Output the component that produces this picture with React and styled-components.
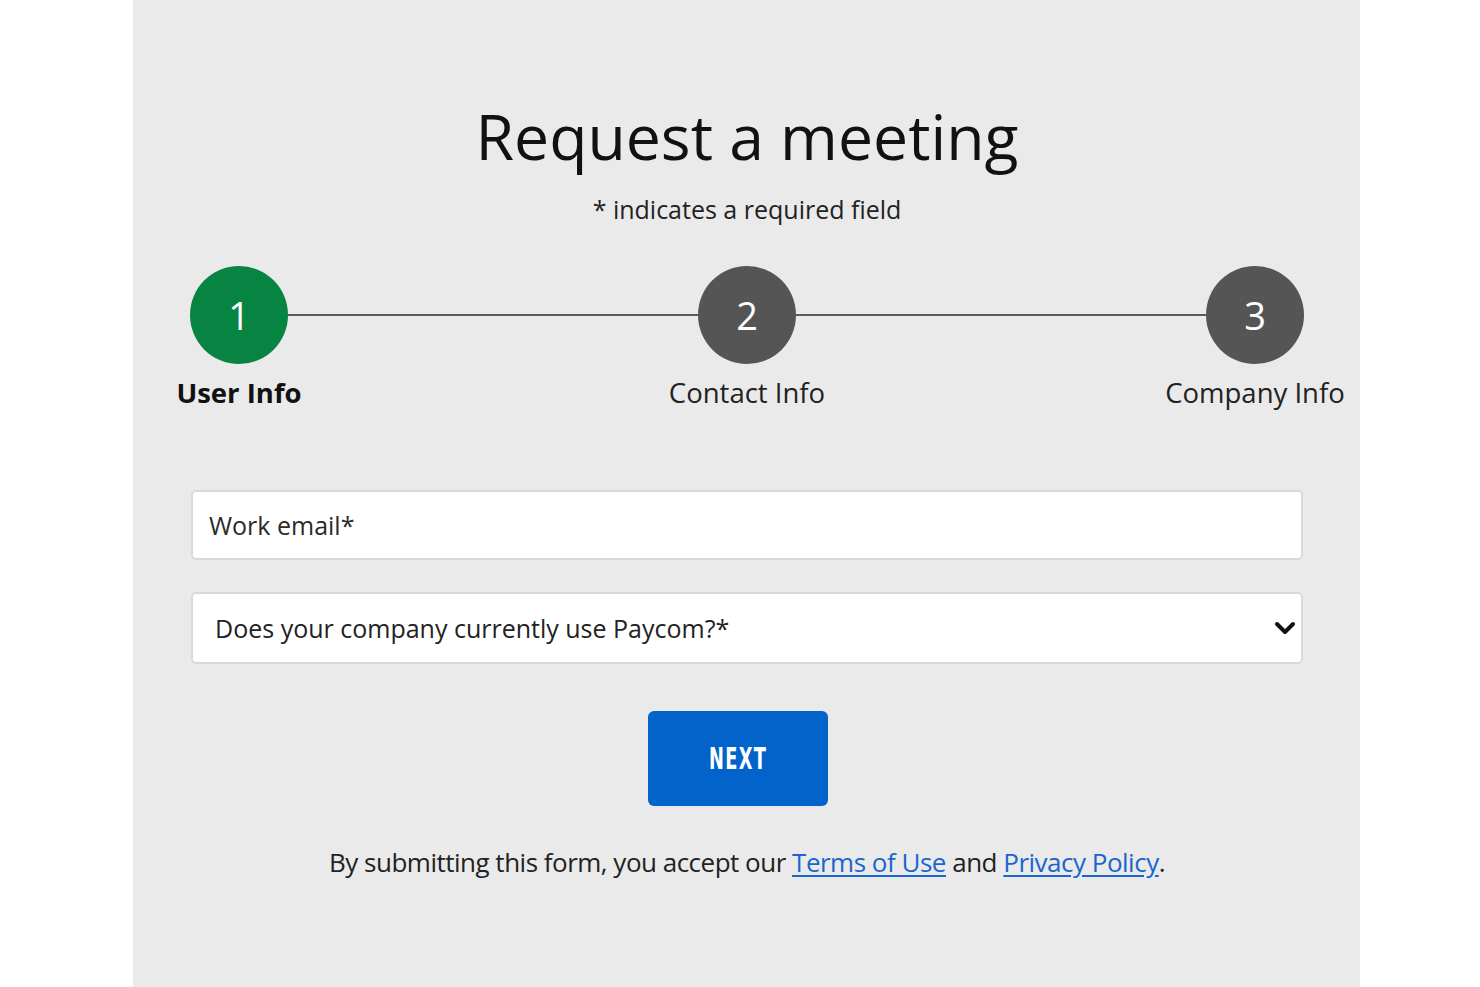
import styled, { createGlobalStyle } from "styled-components";

const GlobalStyle = createGlobalStyle`
  body {
    margin: 0;
    background: #ffffff;
    font-family: "Open Sans", "Liberation Sans", sans-serif;
  }
`;

const Page = styled.div`
  display: flex;
  justify-content: flex-start;
`;

const Panel = styled.div`
  width: 1227px;
  min-height: 987px;
  margin-left: 133px;
  background: #eaeaea;
  box-sizing: border-box;
  padding: 98px 57px 0 58px;
  display: flex;
  flex-direction: column;
  align-items: center;
`;

const Title = styled.h1`
  margin: 0;
  font-size: 62.5px;
  line-height: 76px;
  font-weight: 400;
  color: #111;
`;

const Subtitle = styled.p`
  margin: 19px 0 0;
  font-size: 25px;
  line-height: 32px;
  color: #222;
`;

const Steps = styled.div`
  align-self: stretch;
  display: flex;
  align-items: flex-start;
  margin: 41px -1px 0 -1px;
`;

const Step = styled.div`
  width: 98px;
  display: flex;
  flex-direction: column;
  align-items: center;
`;

const Circle = styled.div`
  width: 98px;
  height: 98px;
  border-radius: 50%;
  background: ${(p) => (p.$active ? "#078442" : "#555556")};
  color: #fff;
  display: flex;
  align-items: center;
  justify-content: center;
  font-size: 38px;
  flex-shrink: 0;
`;

const StepLabel = styled.div`
  margin-top: 12px;
  font-size: 27.5px;
  line-height: 34px;
  white-space: nowrap;
  font-weight: ${(p) => (p.$active ? 700 : 400)};
  color: ${(p) => (p.$active ? "#111" : "#222")};
`;

const Connector = styled.div`
  flex: 1;
  height: 2px;
  margin-top: 48px;
  background: #5a5a5a;
`;

const Form = styled.form`
  align-self: stretch;
  margin-top: 80px;
  display: flex;
  flex-direction: column;
  align-items: center;
`;

const TextInput = styled.input`
  width: 100%;
  height: 70px;
  box-sizing: border-box;
  border: 2px solid #d6d9dd;
  border-radius: 5px;
  background: #fff;
  padding: 0 16px;
  font-family: inherit;
  font-size: 25px;
  color: #222;
  outline: none;
  &::placeholder {
    color: #2a2a2a;
    opacity: 1;
  }
`;

const SelectWrap = styled.div`
  position: relative;
  width: 100%;
  margin-top: 32px;
`;

const Select = styled.select`
  width: 100%;
  height: 72px;
  box-sizing: border-box;
  border: 2px solid #d6d9dd;
  border-radius: 5px;
  background: #fff;
  padding: 0 60px 0 22px;
  font-family: inherit;
  font-size: 25px;
  color: #222;
  appearance: none;
  outline: none;
`;

const Chevron = styled.svg`
  position: absolute;
  right: 6px;
  top: 27px;
  pointer-events: none;
`;

const NextButton = styled.button`
  margin: 47px 18px 0 0;
  width: 180px;
  height: 95px;
  border: none;
  border-radius: 6px;
  background: #0263cb;
  color: #fff;
  cursor: pointer;
  display: flex;
  align-items: center;
  justify-content: center;
`;

const ButtonText = styled.span`
  font-family: "DejaVu Sans Condensed", "DejaVu Sans", sans-serif;
  font-weight: 700;
  font-size: 30px;
  letter-spacing: 2px;
  display: inline-block;
  transform: scaleX(0.66);
`;

const Legal = styled.p`
  margin: 39px 0 0;
  font-size: 26px;
  line-height: 34px;
  letter-spacing: -0.5px;
  color: #222;
`;

const Link = styled.a`
  color: #1a66d0;
  text-decoration: underline;
  text-underline-offset: 3px;
`;

const steps = ["User Info", "Contact Info", "Company Info"];

export default function App() {
  return (
    <Page>
      <GlobalStyle />
      <Panel>
        <Title>Request a meeting</Title>
        <Subtitle>* indicates a required field</Subtitle>
        <Steps>
          {steps.map((label, i) => (
            <>
              {i > 0 && <Connector key={`c${i}`} />}
              <Step key={label}>
                <Circle $active={i === 0}>{i + 1}</Circle>
                <StepLabel $active={i === 0}>{label}</StepLabel>
              </Step>
            </>
          ))}
        </Steps>
        <Form onSubmit={(e) => e.preventDefault()}>
          <TextInput type="email" placeholder="Work email*" />
          <SelectWrap>
            <Select defaultValue="">
              <option value="" disabled>
                Does your company currently use Paycom?*
              </option>
              <option value="yes">Yes</option>
              <option value="no">No</option>
            </Select>
            <Chevron width="24" height="18" viewBox="0 0 24 18">
              <path
                d="M4 5 L12 13 L20 5"
                fill="none"
                stroke="#111"
                strokeWidth="4"
                strokeLinecap="round"
                strokeLinejoin="round"
              />
            </Chevron>
          </SelectWrap>
          <NextButton type="submit">
            <ButtonText>NEXT</ButtonText>
          </NextButton>
          <Legal>
            By submitting this form, you accept our <Link href="#">Terms of Use</Link> and{" "}
            <Link href="#">Privacy Policy</Link>.
          </Legal>
        </Form>
      </Panel>
    </Page>
  );
}
